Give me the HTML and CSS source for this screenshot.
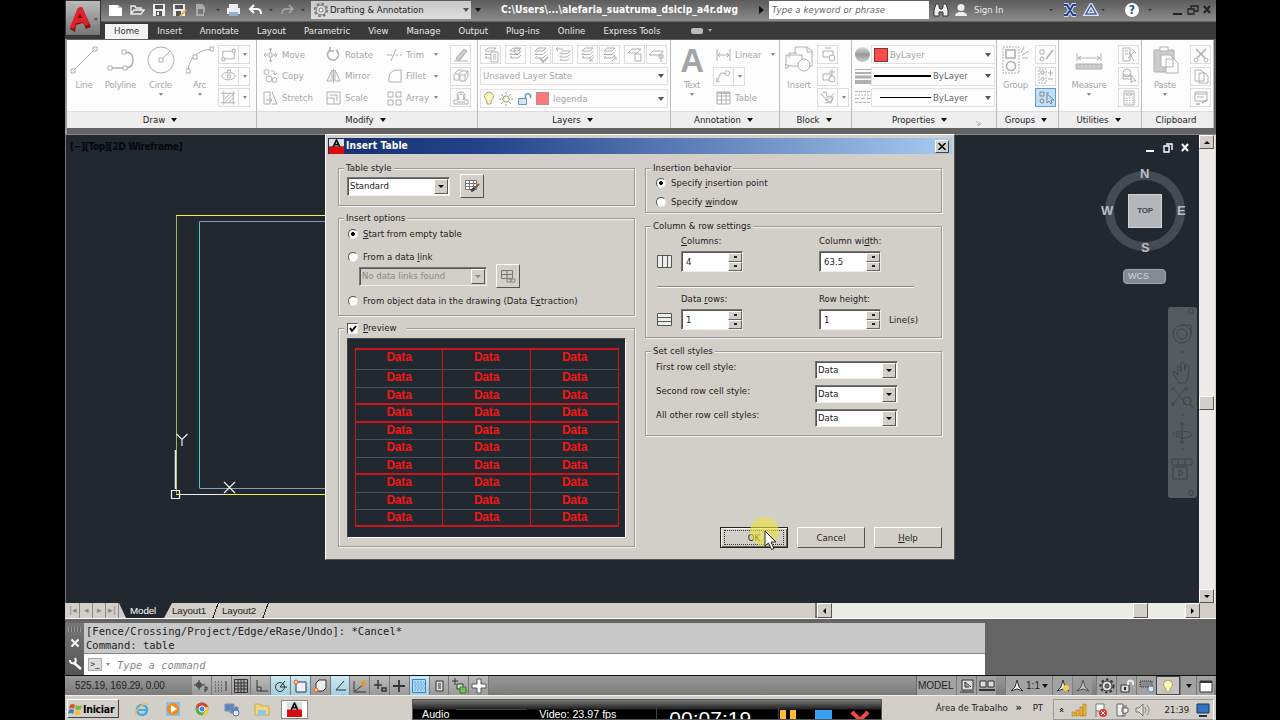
FILE: index.html
```html
<!DOCTYPE html>
<html lang="en">
<head>
    <meta charset="UTF-8">
    <meta name="viewport" content="width=device-width, initial-scale=1.0">
    <title>Insert Table</title>
    <link rel="stylesheet" href="styles.css">
</head>
<body>
    <!-- shared icons -->
    <svg class="defs" width="0" height="0">
        <symbol id="layer" viewBox="0 0 16 16"><path d="M3 5l3-3h8l-3 3zM3 8.500l2-2M3 8.500h8l3-3M3 12l2-2M3 12h8l3-3"/></symbol>
        <symbol id="person" viewBox="0 0 14 14"><circle cx="7" cy="4.500" r="3.500"/><path d="M1 13q0-3 4-4h4q4 1 4 4z"/></symbol>
        <symbol id="compass" viewBox="0 0 14 14"><path fill="#eee" d="M7 1l2 7 4 4-6-2-6 2 4-4z"/></symbol>
        <symbol id="cad" viewBox="0 0 16 16"><path fill="#ddd" d="M0 0h16v8H0z"/><path fill="#d80c0c" d="M0 8h16v8H0z"/><path fill="none" stroke="#111" stroke-width="1.800" d="M4.500 8.500L8 1l3.500 7.500M6 6h4"/></symbol>
        <symbol id="plus" viewBox="0 0 14 14"><path d="M7 1v12M1 7h12"/></symbol>
    </svg>

    <div class="screen">
        <!-- title bar + ribbon tabs -->
        <header class="header">
            <div class="app-button">
                <svg width="22" height="30" viewBox="0 0 22 30"><path fill="#8e1014" d="M1 25L9 4l4-1 9 20-5 2-3-6-7 2-1 7z"/><path fill="#e32229" d="M1 23L9 4l4-1 7 17-4 2-2-4-7 1-2 6z"/><path fill="#621014" d="M9 14l2-5 2 5z"/></svg>
                <i class="caret dark"></i>
            </div>
            <div class="header-main">
                <div class="titlebar">
                    <div class="quick">
                        <svg width="15" height="14" viewBox="0 0 15 14"><path fill="#fff" d="M1 2h9l4 3v8H1z"/><path fill="#bbb" d="M10 2v3h4z"/></svg>
                        <svg width="16" height="14" viewBox="0 0 16 14"><path fill="none" stroke="#eee" stroke-width="1.300" d="M2 11V3h4l1 2h5v2M2 11l3-4h10l-3 4z"/></svg>
                        <svg width="14" height="14" viewBox="0 0 14 14"><path fill="#eee" d="M1 1h12v12H1z"/><path fill="#555" d="M3 2h8v4H3zM4 8h6v5H4z"/><path fill="#eee" d="M5 9h2v3H5z"/></svg>
                        <svg width="15" height="14" viewBox="0 0 15 14"><path fill="#eee" d="M1 1h12v12H1z"/><path fill="#555" d="M3 2h8v4H3zM4 8h5v5H4z"/><path stroke="#e7b04b" stroke-width="2" d="M8 13l6-6"/></svg>
                        <svg width="16" height="14" viewBox="0 0 16 14"><path fill="#aaa" d="M2 1h6l3 3v9H2z"/><path fill="#777" d="M4 6h5v5H4zM10 9h5v4h-5z"/></svg>
                        <i class="caret dim"></i>
                        <svg width="15" height="14" viewBox="0 0 15 14"><path fill="#eee" d="M3 1h9v4H3zM1 5h13v6H1z"/><path fill="#8fb0ce" d="M3 9h9v4H3z"/></svg>
                        <svg width="15" height="14" viewBox="0 0 15 14"><path fill="none" stroke="#fff" stroke-width="2" d="M2 6h7q4 0 4 5M6 2L2 6l4 4"/></svg>
                        <i class="caret dim"></i>
                        <svg width="15" height="14" viewBox="0 0 15 14"><path fill="none" stroke="#aaa" stroke-width="1.500" d="M13 6H6q-4 0-4 5M9 2l4 4-4 4"/></svg>
                        <i class="caret dim"></i>
                    </div>
                    <div class="workspace">
                        <svg width="16" height="16" viewBox="0 0 16 16"><circle cx="8" cy="8" r="6.300" fill="none" stroke="#777" stroke-width="1.800" stroke-dasharray="2.600 2.300"/><circle cx="8" cy="8" r="5" fill="#ddd" stroke="#777"/><circle cx="8" cy="8" r="2" fill="#fff" stroke="#777"/></svg>
                        <span>Drafting &amp; Annotation</span>
                        <i class="caret dark"></i>
                    </div>
                    <i class="caret black quick-more"></i>
                    <div class="doc-name">C:\Users\...\alefaria_suatruma_dsicip_a4r.dwg</div>
                    <i class="play"></i>
                    <div class="search">Type a keyword or phrase</div>
                    <div class="account">
                        <svg width="16" height="14" viewBox="0 0 16 14"><path fill="#eee" stroke="#333" d="M3 1h3v3l1 2h2l1-2V1h3l2 6v6h-5V9H6v4H1V7z"/></svg>
                        <svg class="user" width="14" height="14"><use href="#person"/></svg>
                        <span class="sign-in">Sign In</span>
                        <i class="caret dim"></i>
                        <svg class="exchange" width="14" height="14" viewBox="0 0 14 14"><path fill="none" stroke="#cfd9f2" stroke-width="4" d="M1 2h3l6 10h3M13 2h-3L4 12H1"/><path fill="none" stroke="#27418d" stroke-width="2" d="M1 2h3l6 10h3M13 2h-3L4 12H1"/></svg>
                        <svg width="16" height="14" viewBox="0 0 16 14"><path fill="none" stroke="#dce5f7" stroke-width="4" d="M8 2l5 9H3z"/><path fill="none" stroke="#456097" stroke-width="1.500" d="M8 2l5 9H3z"/></svg>
                        <i class="caret dim"></i>
                        <div class="help">?</div>
                        <i class="caret dim"></i>
                        <svg class="winctl" width="40" height="12" viewBox="0 0 40 12"><path fill="none" stroke="#222" stroke-width="2" d="M1 10h9M32 2l6 7M38 2l-6 7"/><path fill="none" stroke="#222" stroke-width="1.300" d="M16 5h6v5h-6zM19 5V2h7v5h-4"/></svg>
                    </div>
                </div>
                <nav class="tabs">
                    <a class="tab active">Home</a>
                    <a class="tab">Insert</a>
                    <a class="tab">Annotate</a>
                    <a class="tab">Layout</a>
                    <a class="tab">Parametric</a>
                    <a class="tab">View</a>
                    <a class="tab">Manage</a>
                    <a class="tab">Output</a>
                    <a class="tab">Plug-ins</a>
                    <a class="tab">Online</a>
                    <a class="tab">Express Tools</a>
                    <span class="pill"></span>
                    <i class="caret light"></i>
                </nav>
            </div>
        </header>

        <!-- ribbon -->
        <section class="ribbon">
            <div class="panel p-draw">
                <div class="panel-body">
                    <div class="big w34"><svg width="28" height="30" viewBox="0 0 28 30"><path d="M3 26L25 4"/><path class="node" d="M1 24h4v4H1zM23 2h4v4h-4z"/></svg><span>Line</span></div>
                    <div class="big w39"><svg width="28" height="30" viewBox="0 0 28 30"><path class="thick" d="M3 23h15q8 0 8-8 0-8-8-8"/><path class="node" d="M1 21h4v4H1zM16 21h4v4h-4zM15 5h4v4h-4z"/></svg><span>Polyline</span></div>
                    <div class="big w41"><svg width="28" height="30" viewBox="0 0 28 30"><circle cx="14" cy="15" r="13"/><path d="M14 15l9-9"/><path class="node" d="M12 13h4v4h-4z"/></svg><span>Circle</span><i class="caret grey"></i></div>
                    <div class="big w37"><svg width="28" height="30" viewBox="0 0 28 30"><path d="M2 27Q3 6 26 4"/><path class="node" d="M0 24h4v4H0zM7 10h4v4H7zM24 2h4v4h-4z"/></svg><span>Arc</span><i class="caret grey"></i></div>
                    <div class="stack">
                        <div class="split"><svg width="20" height="18" viewBox="0 0 20 18"><path d="M4 5h12v8H4z"/><path class="node" d="M3 12h3v3H3zM14 3h3v3h-3z"/></svg><i class="caret grey"></i></div>
                        <div class="split"><svg width="20" height="18" viewBox="0 0 20 18"><ellipse cx="10" cy="9" rx="7" ry="4"/><path class="node" d="M9 8h3v3H9zM9 3h3v3H9z"/></svg><i class="caret grey"></i></div>
                        <div class="split"><svg width="20" height="18" viewBox="0 0 20 18"><path d="M5 2v14M15 2v14M2 4h15M2 14h15M6 10l6-6M6 14L15 5M10 14l5-5"/></svg><i class="caret grey"></i></div>
                    </div>
                </div>
                <div class="panel-title">Draw <i class="caret black"></i></div>
            </div>

            <div class="panel p-modify">
                <div class="panel-body">
                    <div class="tools w63">
                        <div class="tool"><svg width="15" height="16" viewBox="0 0 15 16"><path d="M6 6h3v4H6zM7.500 5V1M7.500 11v4M5 8H1M10 8h4M6 3l1.500-2L9 3M6 13l1.500 2L9 13M3 6L1 8l2 2M12 6l2 2-2 2"/></svg>Move</div>
                        <div class="tool"><svg width="15" height="16" viewBox="0 0 15 16"><circle cx="3.500" cy="4" r="2.500"/><circle cx="6" cy="11" r="3"/><circle cx="11.500" cy="12" r="2.500"/><path d="M8 3q4-1 4 4M10 5l2 2 2-2"/></svg>Copy</div>
                        <div class="tool"><svg width="15" height="16" viewBox="0 0 15 16"><path d="M1 2h6v12H1zM9 2l5 12H9M3 10h6M7 8l2 2-2 2"/></svg>Stretch</div>
                    </div>
                    <div class="tools w61">
                        <div class="tool"><svg width="15" height="16" viewBox="0 0 15 16"><path class="thick" d="M10 3a5.500 5.500 0 1 1-6 0M4 0v4h4"/></svg>Rotate</div>
                        <div class="tool"><svg width="15" height="16" viewBox="0 0 15 16"><path d="M6 2v11H1zM9 2v11h5zM7.500 1v14"/></svg>Mirror</div>
                        <div class="tool"><svg width="15" height="16" viewBox="0 0 15 16"><path d="M1 2h13v12H1zM1 8h7v6M4 5h7v6"/></svg>Scale</div>
                    </div>
                    <div class="tools w63">
                        <div class="tool"><svg width="15" height="16" viewBox="0 0 15 16"><path d="M0 8h5M9 8h2M13 8h2M4 14L9 2"/></svg>Trim<i class="caret grey"></i></div>
                        <div class="tool"><svg width="15" height="16" viewBox="0 0 15 16"><path d="M2 14V9q1-7 9-7h3v12z"/></svg>Fillet<i class="caret grey"></i></div>
                        <div class="tool"><svg width="15" height="16" viewBox="0 0 15 16"><path d="M1 2h5v5H1zM9 2h5v5H9zM1 10h5v5H1zM9 10h5v5H9z"/></svg>Array<i class="caret grey"></i></div>
                    </div>
                    <div class="stack">
                        <div class="sq"><svg width="18" height="18" viewBox="0 0 18 18"><path fill="#ccc" d="M4 12l8-9 3 2-7 9H5z"/><path d="M2 15h14"/></svg></div>
                        <div class="sq"><svg width="18" height="18" viewBox="0 0 18 18"><path d="M2 7h5v6H2zM7 7l3-3h6v6l-3 4M8 8h5v6H8zM13 8l3-4M3 6l3-3h4"/></svg></div>
                        <div class="sq"><svg width="18" height="18" viewBox="0 0 18 18"><path d="M2 15h14v-4h-4q3-8-3-8-6 0-3 8H2zM5 13h8M7 11q-2-6 2-6t2 6"/></svg></div>
                    </div>
                </div>
                <div class="panel-title">Modify <i class="caret black"></i></div>
            </div>

            <div class="panel p-layers">
                <div class="panel-body column">
                    <div class="layer-row">
                        <div class="sq"><svg width="18" height="18" viewBox="0 0 18 18"><use href="#layer" width="16" height="16"/><path class="node" d="M9 6h7v10H9zM11 9h3M11 11h3M11 13h3"/></svg></div>
                        <div class="sq sp"><svg width="18" height="18" viewBox="0 0 18 18"><use href="#layer" width="16" height="16"/><circle cx="10" cy="5" r="3"/></svg></div>
                        <div class="sq sp"><svg width="18" height="18" viewBox="0 0 18 18"><use href="#layer" width="16" height="16"/><path class="thick" d="M8 12l3 4 5-5"/></svg></div>
                        <div class="sq"><svg width="18" height="18" viewBox="0 0 18 18"><use href="#layer" x="3" y="3" width="15" height="15"/><path d="M2 3h7M4 1L2 3l2 2"/></svg></div>
                        <div class="sq sp"><svg width="18" height="18" viewBox="0 0 18 18"><use href="#layer" width="16" height="16"/><path d="M15 11l-4 4v-3M11 15h3"/></svg></div>
                        <div class="sq"><svg width="18" height="18" viewBox="0 0 18 18"><use href="#layer" width="16" height="16"/><path d="M11 15l4-4v3M15 11h-3"/></svg></div>
                        <div class="sq sp"><svg width="18" height="18" viewBox="0 0 18 18"><path d="M2 7l4-4h9l-4 4zM9 8h6v7H9z"/></svg></div>
                        <div class="sq"><svg width="18" height="18" viewBox="0 0 18 18"><path d="M1 9l4-4h10l-3 4zM13 9v7M11 9h4v3h-4z"/></svg></div>
                    </div>
                    <div class="combo">Unsaved Layer State<i class="caret dark"></i></div>
                    <div class="combo layer-combo">
                        <svg width="12" height="15" viewBox="0 0 12 15"><path fill="#fdf7b8" stroke="#aaa284" d="M4 10Q1 7 1.500 4.500 3 1 6 1q3 0 4.500 3.500Q11 7 8 10v3H4z"/></svg>
                        <svg width="14" height="14" viewBox="0 0 14 14"><circle cx="7" cy="7" r="3.200" fill="#fdf7c8" stroke="#999"/><path stroke="#999" d="M7 0v2M7 12v2M0 7h2M12 7h2M2 2l2 2M10 10l2 2M12 2l-2 2M2 12l2-2"/></svg>
                        <svg width="15" height="14" viewBox="0 0 15 14"><path fill="#cfe3f3" stroke="#6795bb" d="M1.500 6.500h8v6h-8z"/><path fill="none" stroke="#6795bb" stroke-width="1.500" d="M8.500 6V3q2-3 5 0v3"/></svg>
                        <b class="swatch pale"></b><span>legenda</span><i class="caret dark"></i>
                    </div>
                </div>
                <div class="panel-title">Layers <i class="caret black"></i></div>
            </div>

            <div class="panel p-annotation">
                <div class="panel-body">
                    <div class="big w42"><div class="letter-a">A</div><span>Text</span><i class="caret grey"></i></div>
                    <div class="tools w63">
                        <div class="tool"><svg width="15" height="16" viewBox="0 0 15 16"><path d="M1 2v12M14 2v12M2 8h11M4 6L2 8l2 2M11 6l2 2-2 2"/></svg>Linear<i class="caret grey"></i></div>
                        <div class="split"><svg width="20" height="18" viewBox="0 0 20 18"><path d="M3 15l4-9h5M3 11v4h3"/><circle cx="14" cy="6" r="2.500"/></svg><i class="caret grey"></i></div>
                        <div class="tool"><svg width="15" height="16" viewBox="0 0 15 16"><path d="M1 2h13v12H1zM1 6h13M1 10h13M5.500 2v12M10 2v12"/><path class="thick" d="M1 3h13"/></svg>Table</div>
                    </div>
                </div>
                <div class="panel-title">Annotation <i class="caret black"></i></div>
            </div>

            <div class="panel p-block">
                <div class="panel-body">
                    <div class="big w36"><svg width="28" height="30" viewBox="0 0 28 30"><path d="M10 9V2h12l5 4v15h-5M22 2v5h5M1 10h16v11H1zM4 13V8h8"/><circle class="node" cx="19" cy="20" r="6"/><path class="node" d="M0 20h3v3H0z"/></svg><span>Insert</span></div>
                    <div class="stack">
                        <div class="sq"><svg width="18" height="18" viewBox="0 0 18 18"><path d="M4 5h10v6H4zM6 2h6"/><circle class="node" cx="13" cy="12" r="3"/></svg></div>
                        <div class="sq"><svg width="18" height="18" viewBox="0 0 18 18"><path d="M4 7h8v6H4zM13 2v7M10 5h6"/><circle class="node" cx="13" cy="12" r="3"/></svg></div>
                        <div class="split"><svg width="20" height="18" viewBox="0 0 20 18"><path d="M3 4l6 8 8-8M5 3h4v4M7 14h7l2-7"/><circle cx="12" cy="10" r="3"/></svg><i class="caret grey"></i></div>
                    </div>
                </div>
                <div class="panel-title">Block <i class="caret black"></i></div>
            </div>

            <div class="panel p-properties">
                <div class="panel-body">
                    <div class="prop-icons">
                        <div class="ball"></div>
                        <svg width="16" height="16" viewBox="0 0 16 16"><path d="M0 1.500h16"/><path stroke-width="2" d="M0 5h16"/><path stroke-width="3" d="M0 9h16"/><path stroke-width="4" d="M0 14h16"/></svg>
                        <svg width="16" height="16" viewBox="0 0 16 16"><path stroke-dasharray="3 1" d="M0 2.500h16M0 13.500h16"/><path stroke-dasharray="2 1" d="M0 6h16"/><path stroke-dasharray="4 2" d="M0 9.500h16"/></svg>
                    </div>
                    <div class="prop-combos">
                        <div class="combo"><b class="swatch"></b><span>ByLayer</span><i class="caret dark"></i></div>
                        <div class="combo ink"><b class="weight heavy"></b><span>ByLayer</span><i class="caret dark"></i></div>
                        <div class="combo ink"><b class="weight"></b><span>ByLayer</span><i class="caret dark"></i></div>
                    </div>
                </div>
                <div class="panel-title">Properties <i class="caret black"></i><svg class="launcher" width="6" height="6" viewBox="0 0 6 6"><path d="M1 1l4 4V2M5 5H2"/></svg></div>
            </div>

            <div class="panel p-groups">
                <div class="panel-body">
                    <div class="big w37"><svg width="28" height="30" viewBox="0 0 28 30"><path stroke-dasharray="2 1" d="M1 2h16v26H1z"/><path class="thick" d="M4 5h9v8H4z"/><circle class="thick" cx="9" cy="21" r="4.500"/><path d="M19 8l3-6M20 10l7-4M20 13h6"/></svg><span>Group</span></div>
                    <div class="stack">
                        <div class="sq"><svg width="18" height="18" viewBox="0 0 18 18"><path class="thick" d="M9 13l7-9"/><path d="M3 4h4v4H3z"/><circle cx="5" cy="13" r="2"/></svg></div>
                        <div class="sq"><svg width="18" height="18" viewBox="0 0 18 18"><path stroke-dasharray="2 1" d="M2 2h7v14H2z"/><path d="M4 4h3v3H4zM11 6h5M13.500 3v6M11 12h5"/><circle cx="5.500" cy="12" r="1.500"/></svg></div>
                        <div class="sq on"><svg width="18" height="18" viewBox="0 0 18 18"><path d="M3 3h4v4H3zM9 4h3M10 5v9l2-2 2 3 1-1-1-3h3z"/><circle cx="5" cy="12" r="2"/></svg></div>
                    </div>
                </div>
                <div class="panel-title">Groups <i class="caret black"></i></div>
            </div>

            <div class="panel p-utilities">
                <div class="panel-body">
                    <div class="big w58"><svg width="28" height="30" viewBox="0 0 28 30"><path d="M2 8v8M26 8v8M3 13h22M6 11l-3 2 3 2M22 11l3 2-3 2"/><path fill="#ccc" d="M1 19h26v5H1zM5 19v2M9 19v2M13 19v2M17 19v2M21 19v2"/></svg><span>Measure</span><i class="caret grey"></i></div>
                    <div class="stack">
                        <div class="sq"><svg width="18" height="18" viewBox="0 0 18 18"><path d="M3 2h7v13H3zM5 5h3M5 8h3M8 12l7-7M12 3l4 4M9 6l5 9"/></svg></div>
                        <div class="sq"><svg width="18" height="18" viewBox="0 0 18 18"><circle cx="7" cy="6" r="4"/><path d="M3 8h8v4H3zM11 8l5 6h-3l-2 2z"/></svg></div>
                        <div class="sq"><svg width="18" height="18" viewBox="0 0 18 18"><path d="M4 2h10v14H4zM6 4h6v2H6z"/><path stroke-dasharray="1.500 1.500" d="M6 9h7M6 11.500h7M6 14h7"/></svg></div>
                    </div>
                </div>
                <div class="panel-title">Utilities <i class="caret black"></i></div>
            </div>

            <div class="panel p-clipboard">
                <div class="panel-body">
                    <div class="big w46"><svg width="28" height="30" viewBox="0 0 28 30"><path fill="#ccc" d="M3 5h20v22H3z"/><path class="node" d="M9 2h8v4H9zM10 10h9l3 3v9H10zM15 14h8l4 4v10H15z"/></svg><span>Paste</span><i class="caret grey"></i></div>
                    <div class="stack">
                        <div class="sq"><svg width="18" height="18" viewBox="0 0 18 18"><path class="thick" d="M4 3l9 9M14 3l-9 9"/><circle cx="4" cy="14" r="2"/><circle cx="14" cy="14" r="2"/></svg></div>
                        <div class="sq"><svg width="18" height="18" viewBox="0 0 18 18"><path class="node" d="M3 3h6l3 3v8H3zM7 6h6l3 3v7H7z"/></svg></div>
                        <div class="sq"><svg width="18" height="18" viewBox="0 0 18 18"><path d="M3 3h12v9H3zM3 5h12M5 8h7"/><path class="thick" d="M4 15h4M10 14l5-3"/></svg></div>
                    </div>
                </div>
                <div class="panel-title">Clipboard</div>
            </div>
        </section>

        <!-- drawing area -->
        <main class="workarea">
            <div class="canvas">
                <div class="view-label">[−][Top][2D Wireframe]</div>
                <svg class="drawing" width="262" height="468" viewBox="0 0 262 468">
                    <path stroke="#a6b05c" d="M111.500 80.500v278"/>
                    <path stroke="#f4f43c" d="M111 80.500H262M111 359.500H262"/>
                    <path stroke="#4fc6cc" d="M134.500 87v266"/>
                    <path stroke="#7fa0b4" d="M134.500 86.500H262M134.500 353.500H262"/>
                    <path stroke="#eee" stroke-width="1.500" d="M110.500 315v39"/>
                    <path stroke="#eee" stroke-width="1.200" d="M106.500 355.500h8v8h-8zM115 359.500h46M159 347l11 11M170 347l-11 11M111.500 299l5.500 5.500 5.500-5.500M117 304v7"/>
                </svg>
                <svg class="doc-ctl" width="46" height="12" viewBox="0 0 46 12"><path fill="none" stroke="#fff" stroke-width="2" d="M1 9h8M37 2l6 7M43 2l-6 7"/><path fill="none" stroke="#fff" stroke-width="1.400" d="M19 4h5v6h-5zM21 2h6v6"/></svg>
                <div class="viewcube">
                    <i class="ring"></i>
                    <span class="n">N</span><span class="w">W</span><span class="e">E</span><span class="s">S</span>
                    <div class="face">TOP</div>
                </div>
                <div class="wcs">WCS</div>
                <div class="navbar">
                    <svg width="28" height="190" viewBox="0 0 28 190">
                        <circle cx="23" cy="4" r="2.500"/><circle cx="23" cy="186" r="2.500"/>
                        <circle cx="14" cy="27" r="9"/><circle cx="14" cy="27" r="5"/><path d="M14 18h9v9"/>
                        <path d="M9 73l-4-7q0-3 3 0l2 2-1-8q2-2 3 0l1 5V56q2-2 3 0l1 8 1-6q2-1 3 1l-1 12-3 5h-6z"/>
                        <path d="M6 82l12 15M17 82L5 97M4 84v-3h3M16 81h3v3M4 95v3h3"/><circle cx="19" cy="94" r="4"/><path d="M22 97l3 4"/>
                        <path d="M14 116v20M12 118l2-3 2 3M12 134l2 3 2-3M6 129q-5-4 8-5 13 1 9 5-5 3-11 2"/><circle cx="10" cy="128" r="2"/>
                        <path d="M4 152h20v6H4zM10 152v6M17 152v6M5 160h14v12H5zM11 163v6l4-3z"/>
                        <path d="M13 45h3M13 108h3M13 142h3"/>
                    </svg>
                </div>
            </div>
            <div class="vscroll">
                <div class="sbtn"><i class="arrow up"></i></div>
                <div class="sthumb"></div>
                <div class="sbtn"><i class="arrow down"></i></div>
            </div>
        </main>

        <!-- layout tabs + horizontal scrollbar -->
        <div class="layouts">
            <div class="navs"><span>|◂</span><span>◂</span><span>▸</span><span>▸|</span></div>
            <div class="ltab current">Model</div>
            <div class="ltab">Layout1</div>
            <div class="ltab">Layout2</div>
            <div class="hscroll">
                <div class="sbtn"><i class="arrow left"></i></div>
                <div class="sthumb"></div>
                <div class="sbtn"><i class="arrow right"></i></div>
            </div>
        </div>

        <!-- command line -->
        <div class="command">
            <div class="cmd-side">
                <i class="grip"></i>
                <svg width="10" height="10" viewBox="0 0 10 10"><path stroke="#fff" stroke-width="2" d="M1.500 1.500l7 7M8.500 1.500l-7 7"/></svg>
                <svg width="14" height="13" viewBox="0 0 14 13"><path fill="none" stroke="#fff" stroke-width="2.500" d="M6 6l7 6"/><path fill="none" stroke="#fff" stroke-width="2" d="M2 3q0 4 4 3 3-1 1-5"/></svg>
            </div>
            <div class="cmd-main">
                <div class="cmd-log">[Fence/Crossing/Project/Edge/eRase/Undo]: *Cancel*<br>Command: table</div>
                <div class="cmd-input"><b>&gt;_</b><i class="caret grey"></i><span>Type a command</span></div>
            </div>
        </div>

        <!-- status bar -->
        <div class="status">
            <div class="coords">525.19, 169.29, 0.00</div>
            <div class="toggles">
                <div><svg width="16" height="14" viewBox="0 0 16 14"><path d="M6 1v10M1 6h11M4 4h4v4H4zM12 13V8h2v3h-2"/></svg></div>
                <div><svg width="14" height="14" viewBox="0 0 14 14"><path stroke-dasharray="1 2" d="M1 3h9M1 6h9M1 9h9M1 12h9"/><path d="M12 2v10"/></svg></div>
                <div><svg width="14" height="14" viewBox="0 0 14 14"><path d="M.5.500h13v13H.5zM4 0v14M7 0v14M10 0v14M0 4h14M0 7h14M0 10h14"/></svg></div>
                <div><svg width="14" height="14" viewBox="0 0 14 14"><path d="M3 1v11h11M3 8h4v4"/></svg></div>
                <div class="on"><svg width="14" height="14" viewBox="0 0 14 14"><circle cx="6" cy="8" r="4.500"/><path d="M6 8l5-6M6 8h7"/></svg></div>
                <div class="on"><svg width="14" height="14" viewBox="0 0 14 14"><path fill="#eef" d="M3 3h10v10H3z"/><circle cx="3" cy="3" r="2" fill="#fc8" stroke="#c63"/></svg></div>
                <div><svg width="14" height="14" viewBox="0 0 14 14"><path fill="#eee" d="M3 4l3-3h7v8l-3 3H3z"/><circle cx="3" cy="11" r="2" fill="#fc8" stroke="#c63"/></svg></div>
                <div class="on"><svg width="14" height="14" viewBox="0 0 14 14"><path d="M11 2L3 11h10"/></svg></div>
                <div><svg width="14" height="14" viewBox="0 0 14 14"><path d="M1 2v11h12M2 12l8-6"/><path stroke="#e49a32" stroke-width="2" d="M12 1L9 4l3 1-3 3"/></svg></div>
                <div><svg width="14" height="14" viewBox="0 0 14 14"><path stroke-width="1.500" d="M5 1v9M1 6h8M9 9h4v3H9z"/></svg></div>
                <div><svg width="14" height="14" viewBox="0 0 14 14"><g stroke-width="1.800"><use href="#plus"/></g></svg></div>
                <div class="on"><svg width="14" height="14" viewBox="0 0 14 14"><path fill="#b2dafa" stroke="#3684ba" d="M.5.500h13v13H.5z"/><path stroke="#5c9dc9" stroke-dasharray="2 1" d="M2 3h10M3 5h10M2 7h10M3 9h10M2 11h10"/></svg></div>
                <div><svg width="14" height="14" viewBox="0 0 14 14"><path fill="#ddd" d="M4 2h7v10H4zM6 5h3M6 7h3M6 9h3"/></svg></div>
                <div><svg width="16" height="16" viewBox="0 0 16 16"><path fill="#ddd" d="M4 0v7M1 3h6M6 6h6v5H6z"/><path fill="#71c25c" stroke="#347c28" d="M9 9h6v6H9z"/></svg></div>
                <div><svg width="16" height="16" viewBox="0 0 16 16"><path fill="#fff" stroke="#555" d="M6 1h4v5h5v4h-5v5H6v-5H1V6h5z"/></svg></div>
            </div>
            <div class="status-right">
                <div class="model">MODEL</div>
                <div class="cell"><svg width="14" height="14" viewBox="0 0 14 14"><path fill="#ddd" d="M2 1h11v10H2zM0 13h14M5 3l6 5M5 3v5h4"/></svg></div>
                <div class="cell"><svg width="16" height="14" viewBox="0 0 16 14"><path fill="#ddd" d="M1 2h6v6H1zM9 2h6v6H9z"/><path stroke-width="2" d="M0 11h16"/></svg></div>
                <div class="cell scale"><svg width="14" height="14"><use href="#compass"/></svg>1:1<i class="caret black"></i></div>
                <div class="cell"><svg width="14" height="14"><use href="#compass"/><circle cx="10" cy="9" r="3" fill="#ffc84e" stroke="none"/></svg></div>
                <div class="cell faded"><svg width="14" height="14"><use href="#compass"/></svg></div>
                <div class="cell gear"><svg width="16" height="16" viewBox="0 0 16 16"><circle cx="8" cy="8" r="6.500" stroke-width="2" stroke-dasharray="2.500 2.300"/><circle cx="8" cy="8" r="5" fill="#ddd"/><circle cx="8" cy="8" r="2" fill="#777"/></svg></div>
                <div class="cell"><svg width="16" height="14" viewBox="0 0 16 14"><path fill="#ddd" d="M2 6h8v7H2z"/><path stroke="#eee" stroke-width="2" d="M9 6V3q2-3 5 0v3"/><path stroke="#222" stroke-width="2" d="M6 8v3"/></svg></div>
                <div class="cell"><svg width="16" height="14" viewBox="0 0 16 14"><path fill="#888" stroke-dasharray="1 1" d="M1 2h12v6H1z"/><circle cx="12" cy="10" r="3" fill="#d5e7f5" stroke="#6289b5"/></svg></div>
                <div class="cell bulb"><svg width="12" height="14" viewBox="0 0 12 14"><path fill="#fff9b3" stroke="#a39864" d="M4 10Q1 7 1.500 4.500 3 1 6 1q3 0 4.500 3.500Q11 7 8 10v3H4z"/></svg></div>
                <div class="cell more"><i class="caret black"></i></div>
                <div class="cell clean"><svg width="14" height="14" viewBox="0 0 14 14"><path fill="#fff" d="M1 2h12v11H1z"/><path stroke-width="2" d="M1 3h12"/></svg></div>
            </div>
        </div>

        <!-- taskbar -->
        <footer class="taskbar">
            <div class="start"><svg width="15" height="14" viewBox="0 0 15 14"><path fill="#e0562d" d="M2 3q3-2 5 0L6 7Q4 5 1 7z"/><path fill="#79b83c" d="M8 3q3 2 6 0l-1 4q-3 2-6 0z"/><path fill="#3a84c8" d="M1 8q3-2 5 0l-1 4q-2-2-5 0z"/><path fill="#f2c230" d="M7 8q3 2 6 0l-1 4q-3 2-6 0z"/></svg>Iniciar</div>
            <div class="pinned">
                <svg width="16" height="16" viewBox="0 0 16 16"><circle cx="8" cy="9" r="5" fill="none" stroke="#44a9e4" stroke-width="2.500"/><path stroke="#44a9e4" stroke-width="2" d="M4 9h9"/><path fill="none" stroke="#efc04a" stroke-width="1.500" d="M2 14Q0 11 7 5q7-5 7-1"/></svg>
                <svg width="16" height="16" viewBox="0 0 16 16"><path fill="#8dbce3" d="M1 1h14v14H1z"/><circle cx="8" cy="8" r="6" fill="#f08a1c"/><path fill="#fff" d="M6 4l6 4-6 4z"/></svg>
                <svg width="14" height="14" viewBox="0 0 14 14"><circle cx="7" cy="7" r="6.500" fill="#4dae50"/><path fill="#dd4536" d="M1 4q2-3.500 6-3.500T13.500 5H7L4 8z"/><path fill="#f7cb35" d="M13.500 5q1 7-6 8.500L10 8 7 5z"/><circle cx="7" cy="7" r="3" fill="#4285f4" stroke="#fff"/></svg>
                <svg width="16" height="16" viewBox="0 0 16 16"><path fill="#5583c8" stroke="#8792a5" d="M1 3h9v7H1zM6 6h8v6H6z"/><circle cx="12" cy="12" r="3" fill="#dce8f8" stroke="#5d7291"/></svg>
                <svg width="16" height="16" viewBox="0 0 16 16"><path fill="#f3d878" stroke="#c8aa4c" d="M1 3h5l1 2h8v9H1z"/><path fill="#91c8ea" d="M4 9h8v5H4z"/></svg>
                <div class="running"><svg width="15" height="15"><use href="#cad"/></svg></div>
            </div>
            <div class="tray-label">Área de Trabalho <b>»</b> <span>PT</span></div>
            <div class="tray">
                <b>«</b>
                <svg width="16" height="14" viewBox="0 0 16 14"><path fill="#eeb73a" stroke="#a87a20" stroke-width=".6" d="M1 9h3v4H1zM5 7h3v6H5zM9 4h3v9H9zM12 1h3v12h-3z"/></svg>
                <svg width="16" height="16" viewBox="0 0 16 16"><path fill="#fff" stroke="#777" d="M3 2v13M3 2h8v7H3"/><circle cx="10" cy="11" r="4" fill="#da3b32"/><path stroke="#fff" d="M8 9l4 4M12 9l-4 4"/></svg>
                <svg width="14" height="16" viewBox="0 0 14 16"><path fill="#eee" stroke="#666" d="M2 2h6v12H2zM7 6h6v4q-3 3-6 0zM9 3v3M11 3v3M10 11v3H7"/></svg>
                <svg width="16" height="14" viewBox="0 0 16 14"><path fill="#ddd" stroke="#777" d="M1 5h3l4-4v12L4 9H1z"/><path fill="none" stroke="#888" d="M10 4q2 3 0 6M12 2q4 5 0 10"/></svg>
                <span>21:39</span>
                <svg width="14" height="14" viewBox="0 0 14 14"><path fill="#3273c6" stroke="#234" d="M1 1h12v9H1z"/><path stroke="#234" stroke-width="2" d="M3 13h8"/></svg>
            </div>
            <!-- screen recorder sits over the taskbar -->
            <div class="recorder">
                <span>Audio</span><i class="meter"></i>
                <span class="fps">Video: 23.97 fps</span>
                <div class="timer">00:07:19</div>
                <div class="rec-buttons">
                    <i class="pause"></i><i class="stop"></i>
                    <svg width="20" height="20" viewBox="0 0 20 20"><path stroke="#f04a48" stroke-width="4" d="M2 2l16 16M18 2L2 18"/></svg>
                </div>
            </div>
        </footer>

        <!-- Insert Table dialog -->
        <div class="dialog">
            <div class="dialog-title"><svg width="15" height="15"><use href="#cad"/></svg><span>Insert Table</span><div class="close"><svg width="8" height="7" viewBox="0 0 8 7"><path stroke="#000" stroke-width="1.500" d="M.5 0l7 7M7.500 0l-7 7"/></svg></div></div>
            <div class="dialog-body">
                <div class="col-left">
                    <fieldset class="f-style">
                        <legend>Table style</legend>
                        <div class="select w102">Standard<b><i class="arrow down"></i></b></div>
                        <div class="tool-btn"><svg width="16" height="16" viewBox="0 0 16 16"><path fill="#fff" stroke="#777" d="M1.500 2.500h11v9h-11zM1 5.500h12M1 8.500h12M5.500 3v9M9.500 3v9"/><path stroke="#8d5b33" stroke-width="2" d="M15 6l-4 4"/><path stroke="#444" stroke-width="3" d="M11 10l-4 3"/></svg></div>
                    </fieldset>
                    <fieldset class="f-options">
                        <legend>Insert options</legend>
                        <label class="radio checked"><i></i><span><u>S</u>tart from empty table</span></label>
                        <label class="radio r2"><i></i><span>From a data <u>l</u>ink</span></label>
                        <div class="link-row">
                            <div class="select disabled w128">No data links found<b><i class="arrow down"></i></b></div>
                            <div class="tool-btn"><svg width="16" height="16" viewBox="0 0 16 16"><path fill="none" stroke="#777" d="M1.500 2.500h11v8h-11zM1 6.500h12M7 3v8"/><path fill="#ccc" stroke="#888" d="M7 11h4v3H7zM11 11h4v3h-4z"/></svg></div>
                        </div>
                        <label class="radio r3"><i></i><span>From object data in the drawing (Data E<u>x</u>traction)</span></label>
                    </fieldset>
                    <fieldset class="f-preview">
                        <legend><i class="check"><svg width="8" height="8" viewBox="0 0 8 8"><path fill="none" stroke="#000" stroke-width="1.800" d="M1 3l2 3 4-5"/></svg></i><span><u>P</u>review</span></legend>
                        <div class="preview">
                            <div class="grid">
                                <span>Data</span><span>Data</span><span>Data</span>
                                <span>Data</span><span>Data</span><span>Data</span>
                                <span class="red">Data</span><span class="red">Data</span><span class="red">Data</span>
                                <span class="red">Data</span><span class="red">Data</span><span class="red">Data</span>
                                <span>Data</span><span>Data</span><span>Data</span>
                                <span>Data</span><span>Data</span><span>Data</span>
                                <span class="red">Data</span><span class="red">Data</span><span class="red">Data</span>
                                <span>Data</span><span>Data</span><span>Data</span>
                                <span>Data</span><span>Data</span><span>Data</span>
                                <span class="red">Data</span><span class="red">Data</span><span class="red">Data</span>
                            </div>
                        </div>
                    </fieldset>
                </div>
                <div class="col-right">
                    <fieldset class="f-behavior">
                        <legend>Insertion behavior</legend>
                        <label class="radio checked"><i></i><span>Specify <u>i</u>nsertion point</span></label>
                        <label class="radio"><i></i><span>Specify <u>w</u>indow</span></label>
                    </fieldset>
                    <fieldset class="f-settings">
                        <legend>Column &amp; row settings</legend>
                        <div class="settings">
                            <svg class="dim-icon" width="15" height="15" viewBox="0 0 15 15"><path fill="#eee" stroke="#555" d="M.5 1.500h14v12H.5zM5.500 1v13M10.500 1v13"/></svg>
                            <div class="field"><span><u>C</u>olumns:</span><div class="spin">4<b><i></i><i></i></b></div></div>
                            <div class="field"><span>Column wi<u>d</u>th:</span><div class="spin">63.5<b><i></i><i></i></b></div></div>
                        </div>
                        <hr>
                        <div class="settings">
                            <svg class="dim-icon" width="15" height="15" viewBox="0 0 15 15"><path fill="#eee" stroke="#555" d="M.5 1.500h14v12H.5zM0 5.500h15M0 9.500h15"/></svg>
                            <div class="field"><span>Data <u>r</u>ows:</span><div class="spin">1<b><i></i><i></i></b></div></div>
                            <div class="field"><span>Row hei<u>g</u>ht:</span><div class="spin">1<b><i></i><i></i></b></div></div>
                            <span class="unit">Line(s)</span>
                        </div>
                    </fieldset>
                    <fieldset class="f-cells">
                        <legend>Set cell styles</legend>
                        <div class="cell-row"><span>First row cell style:</span><div class="select w83">Data<b><i class="arrow down"></i></b></div></div>
                        <div class="cell-row"><span>Second row cell style:</span><div class="select w83">Data<b><i class="arrow down"></i></b></div></div>
                        <div class="cell-row"><span>All other row cell styles:</span><div class="select w83">Data<b><i class="arrow down"></i></b></div></div>
                    </fieldset>
                    <div class="actions">
                        <div class="btn default"><span>OK</span></div>
                        <div class="btn">Cancel</div>
                        <div class="btn"><span><u>H</u>elp</span></div>
                    </div>
                </div>
            </div>
        </div>

        <!-- highlighted mouse pointer -->
        <div class="pointer"><svg width="14" height="21" viewBox="0 0 14 21"><path fill="#fff" stroke="#222" d="M1 1v15l3.500-3 3 6.500 2.500-1-3-6.500h5z"/></svg></div>
    </div>
</body>
</html>
```
FILE: styles.css
```css
* {
    margin: 0;
    padding: 0;
    box-sizing: border-box;
}

body {
    background: #000;
    font-family: "DejaVu Sans Condensed", "DejaVu Sans", sans-serif;
    font-size: 9.5px;
    line-height: 12px;
    color: #222;
    overflow: hidden;
}

i, b {
    font-style: normal;
}

svg {
    flex: none;
    display: block;
}

.defs {
    position: absolute;
}

.screen {
    position: relative;
    width: 1280px;
    height: 720px;
    padding: 0 64px 0 65px;
    overflow: hidden;
    white-space: nowrap;
    display: flex;
    flex-direction: column;
}

.caret {
    display: inline-block;
    flex: none;
    border: 3px solid transparent;
    border-top: 4px solid #333;
    border-bottom: 0;
}

.caret.black { border-top-color: #111; border-left-width: 3.5px; border-right-width: 3.5px; }
.caret.dark { border-top-color: #555; }
.caret.grey { border-top-color: #888; border-left-width: 2px; border-right-width: 2px; border-top-width: 3px; }
.caret.dim { border-top-color: #333; border-left-width: 2px; border-right-width: 2px; border-top-width: 2px; }
.caret.light { border-top-color: #aaa; border-left-width: 2px; border-right-width: 2px; border-top-width: 3px; }

/* header */
.header {
    display: flex;
    height: 39px;
    background: linear-gradient(#5c5c5c, #8b8b8b 21px, #3a3a3a 22px);
}

.app-button {
    width: 36px;
    height: 36px;
    padding: 2px 0 0 3px;
    display: flex;
    align-items: center;
    gap: 3px;
    background: linear-gradient(#bbb, #777);
    border: 1px solid #333;
}

.app-button .caret { border-width: 3px 2.5px 0; }

.header-main {
    flex: 1;
    min-width: 0;
}

.titlebar {
    height: 22px;
    display: flex;
    align-items: center;
    padding-bottom: 2px;
}

.quick {
    width: 210px;
    padding-left: 7px;
    display: flex;
    align-items: center;
    gap: 6.4px;
}

.workspace {
    width: 160px;
    height: 18px;
    padding: 0 2px;
    display: flex;
    align-items: center;
    gap: 1px;
    background: linear-gradient(#c8c8c8, #dedede);
}

.workspace .caret {
    margin-left: auto;
}

.quick-more {
    margin: 0 20px 0 4px;
}

.doc-name {
    width: 258px;
    color: #fff;
    font-size: 10.2px;
    font-weight: bold;
    letter-spacing: 0.08px;
}

.play {
    border: 4px solid transparent;
    border-left: 5px solid #111;
    border-right: 0;
    margin-right: 5px;
}

.search {
    width: 160px;
    height: 18px;
    line-height: 18px;
    padding-left: 3px;
    background: #fff;
    color: #666;
    font-style: italic;
    letter-spacing: 0.1px;
}

.account {
    flex: 1;
    display: flex;
    align-items: center;
    padding-left: 4px;
    color: #eee;
}

.user {
    fill: #eee;
    margin: 0 6px 0 5px;
}

.sign-in { width: 73px; }
.exchange { margin: 0 6px 0 10px; }

.account .caret { margin-left: 2px; }

.help {
    width: 14px;
    height: 14px;
    margin: 0 7px 0 20px;
    border-radius: 50%;
    background: #fff;
    color: #2f4f8f;
    font-size: 12px;
    font-weight: bold;
    line-height: 14px;
    text-align: center;
}

.winctl { margin-left: 20px; }

.tabs {
    height: 17px;
    display: flex;
    align-items: center;
    padding-left: 4px;
    color: #e8e8e8;
}

.tab {
    height: 15px;
    padding: 0 9px;
    line-height: 15px;
}

.tab.active {
    margin-top: 2px;
    line-height: 14px;
    background: #f3f3f3;
    color: #333;
}

.pill {
    width: 12px;
    height: 6px;
    margin: 0 5px 0 22px;
    border-radius: 2px;
    background: #bbb;
}

/* ribbon */
.ribbon {
    display: flex;
    height: 95px;
    padding: 1px 0 6px 2px;
    background: #646464;
    box-shadow: inset 2px 0 #999;
    color: #a6a6a6;
}

.panel {
    border-right: 1px solid #bbb;
    background: #fdfdfd;
}

.p-draw { width: 190px; }
.p-modify { width: 221px; }
.p-layers { width: 193px; }
.p-annotation { width: 109px; }
.p-block { width: 72px; }
.p-properties { width: 145px; }
.p-groups { width: 62px; }
.p-utilities { width: 83px; }
.p-clipboard { width: 72px; }

.panel svg {
    fill: none;
    stroke: #b0b0b0;
    stroke-width: 1;
}

.panel svg .thick { stroke-width: 1.6; }
.panel svg .node { fill: #fff; }

.panel-body {
    height: 71px;
    padding-top: 5px;
    display: flex;
}

.panel-body.column {
    flex-direction: column;
    padding: 5px 2px 0 2px;
    gap: 3px;
}

.panel-title {
    height: 17px;
    display: flex;
    align-items: center;
    justify-content: center;
    gap: 6px;
    padding-right: 3px;
    background: #eee;
    border-top: 1px solid #ddd;
    color: #222;
}

.p-modify .panel-body { padding-left: 6px; }
.p-block .panel-body { padding-left: 1px; }
.p-utilities .panel-body { padding-left: 1px; }

.big {
    display: flex;
    flex-direction: column;
    align-items: center;
    letter-spacing: -0.2px;
}

.big span { margin-top: 4px; }
.big .caret { margin-top: 2px; }

.w34 { width: 34px; }
.w36 { width: 36px; }
.w37 { width: 37px; }
.w39 { width: 39px; }
.w41 { width: 41px; }
.w42 { width: 42px; }
.w46 { width: 46px; }
.w58 { width: 58px; }
.w61 { width: 61px; }
.w63 { width: 63px; }

.letter-a {
    height: 30px;
    font: bold 33px/32px "Liberation Sans", sans-serif;
    color: #a4a4a4;
}

.stack, .tools {
    display: flex;
    flex-direction: column;
    gap: 2.5px;
}

.tool {
    height: 19px;
    display: flex;
    align-items: center;
    gap: 4px;
}

.tool .caret {
    margin-left: auto;
    margin-right: 12px;
}

.p-annotation .tool { padding-left: 3px; width: 74px; }

.sq {
    width: 21px;
    height: 19px;
    border: 1px solid #ddd;
    display: flex;
    align-items: center;
    justify-content: center;
}

.sq.on {
    background: #c3def5;
    border-color: #5da0d5;
}

.sq.on svg { stroke: #7a8a99; }

.split {
    width: 32px;
    height: 19px;
    display: flex;
    align-items: center;
    border: 1px solid #ddd;
}

.split .caret {
    margin-left: 4px;
}

.split svg { border-right: 1px solid #ddd; }

.p-groups .stack, .p-utilities .stack, .p-clipboard .stack { margin-left: auto; margin-right: 2px; }

.layer-row { display: flex; gap: 1px; }
.layer-row .sp { margin-left: 3px; }

.combo {
    height: 18px;
    padding: 0 3px 0 2px;
    display: flex;
    align-items: center;
    border: 1px solid #e2e2e2;
}

.combo .caret { margin-left: auto; }

.layer-combo {
    height: 19px;
    margin-top: 1px;
    gap: 4px;
}

.swatch {
    width: 14px;
    height: 14px;
    background: #fb4a4a;
    border: 1px solid #833;
}

.swatch.pale {
    width: 13px;
    height: 13px;
    background: #fa7a7a;
    border-color: #c88;
}

.prop-icons {
    width: 16px;
    margin: 2px 0 0 3px;
    display: flex;
    flex-direction: column;
    gap: 5.5px;
}

.ball {
    width: 15px;
    height: 15px;
    border-radius: 50%;
    background: linear-gradient(#ddd, #999 50%, #ccc);
}

.prop-combos {
    width: 124px;
    display: flex;
    flex-direction: column;
    gap: 2.5px;
}

.prop-combos .combo { height: 19px; }
.combo.ink { color: #666; }
.prop-combos .swatch { margin-right: 2px; }

.weight {
    width: 51px;
    height: 1px;
    margin: 0 2px 0 6px;
    background: #000;
}

.weight.heavy {
    width: 57px;
    height: 2px;
    margin-left: 0;
}

.launcher { margin: 6px -28px 0 22px; }

/* drawing area */
.workarea {
    display: flex;
    height: 469px;
    border-top: 1px solid #888;
    background: #d2cec8;
}

.canvas {
    position: relative;
    width: 1134px;
    background: #212830;
    border-left: 1px solid #777;
}

.view-label {
    position: absolute;
    left: 4px;
    top: 6px;
    color: #05070a;
    font-size: 10px;
    font-weight: bold;
    letter-spacing: -0.35px;
}

.drawing {
    position: absolute;
    left: -1px;
    top: 0;
    fill: none;
}

.doc-ctl {
    position: absolute;
    left: 1079px;
    top: 7px;
}

.viewcube {
    position: absolute;
    left: 1034px;
    top: 32px;
    width: 90px;
    height: 90px;
    font: bold 13px/14px "Liberation Sans", sans-serif;
    color: #b9bdc1;
}

.viewcube > * { position: absolute; }

.ring {
    left: 5px;
    top: 4px;
    width: 80px;
    height: 80px;
    border: 9px solid #454b53;
    border-radius: 50%;
}

.n { left: 40px; top: 0; }
.s { left: 41px; top: 74px; }
.w { left: 1px; top: 37px; }
.e { left: 77px; top: 37px; }

.face {
    left: 28px;
    top: 27px;
    width: 34px;
    height: 34px;
    background: #b4b6ba;
    border: 1px solid #d0d2d4;
    color: #444a52;
    font-size: 8px;
    letter-spacing: -0.3px;
    line-height: 32px;
    text-align: center;
}

.wcs {
    position: absolute;
    left: 1057px;
    top: 134px;
    width: 43px;
    height: 15px;
    padding-left: 4px;
    border: 1px solid #a2a6ab;
    border-radius: 4px;
    background: #858a91;
    color: #d4d6d9;
    font: 9px/13px "Liberation Sans", sans-serif;
}

.navbar {
    position: absolute;
    left: 1102px;
    top: 172px;
    width: 29px;
    height: 191px;
    border-radius: 3px;
    background: #565b60;
}

.navbar svg {
    fill: none;
    stroke: #3f4347;
}

.vscroll {
    width: 16px;
    margin-right: auto;
    display: flex;
    flex-direction: column;
    background: #ecebe8;
}

.sbtn, .sthumb {
    width: 15px;
    height: 14px;
    background: #d2cec8;
    border: 1px solid #fff;
    border-right-color: #555;
    border-bottom-color: #555;
    display: flex;
    align-items: center;
    justify-content: center;
}

.vscroll .sthumb { margin: 247px 0 auto; }

.arrow { border: 3px solid transparent; }
.arrow.up { border-bottom-color: #000; border-top: 0; }
.arrow.down { border-top-color: #000; border-bottom: 0; }
.arrow.left { border-right-color: #000; border-left: 0; }
.arrow.right { border-left-color: #000; border-right: 0; }

/* layout tabs */
.layouts {
    display: flex;
    height: 16px;
    background: #d2cec8;
    border-bottom: 1px solid #fff;
    font-family: "Liberation Sans", sans-serif;
    font-size: 9.8px;
    letter-spacing: -0.1px;
    line-height: 15px;
}

.navs {
    display: flex;
    padding-left: 2px;
}

.navs span {
    width: 13px;
    border-right: 1px solid #888;
    color: #888;
    font-size: 9px;
    text-align: center;
}

.ltab {
    width: 50px;
    padding-left: 0;
    background: linear-gradient(110deg, transparent 43px, #222 43px, #222 44px, transparent 44px);
}

.ltab.current {
    width: 53px;
    padding-left: 11px;
    background: #212830;
    color: #fff;
    clip-path: polygon(0 0, 100% 0, 45px 100%, 7px 100%);
}

.hscroll {
    width: 385px;
    margin-left: 543px;
    display: flex;
    background: #ecebe8;
    border-left: 2px solid #777;
}

.hscroll .sthumb { margin: 0 auto 0 301px; }
.hscroll .sbtn, .hscroll .sthumb { height: 15px; }

/* command line */
.command {
    display: flex;
    height: 56px;
    padding-top: 4px;
    background: #646464;
}

.cmd-side {
    width: 19px;
    display: flex;
    flex-direction: column;
    align-items: center;
    gap: 9px;
    background: linear-gradient(#777, #555);
}

.grip {
    width: 14px;
    height: 5px;
    margin-top: 4px;
    margin-bottom: -3px;
    background: repeating-linear-gradient(90deg, #999 0 1px, #666 1px 3px);
}

.cmd-main {
    width: 901px;
    font-family: "DejaVu Sans Mono", monospace;
    font-size: 10.5px;
}

.cmd-log {
    height: 31px;
    padding: 2px 0 0 2px;
    line-height: 13.5px;
    background: #c8c8c8;
    border-bottom: 1px solid #888;
}

.cmd-input {
    height: 21px;
    padding-left: 4px;
    display: flex;
    align-items: center;
    gap: 4px;
    background: #fff;
    color: #888;
    font-style: italic;
}

.cmd-input b {
    width: 14px;
    height: 13px;
    border: 1px solid #aaa;
    background: #ddd;
    color: #555;
    font-size: 8px;
    line-height: 11px;
    text-align: center;
}

.cmd-input span { margin-left: 3px; }

/* status bar */
.status {
    display: flex;
    height: 20px;
    border-top: 1px solid #111;
    background: linear-gradient(#999, #7a7a7a);
    font-family: "Liberation Sans", sans-serif;
    font-size: 10px;
    line-height: 20px;
}

.status svg {
    fill: none;
    stroke: #333;
}

.coords {
    width: 127px;
    padding-left: 10px;
    letter-spacing: -0.1px;
}

.toggles { display: flex; }

.toggles div {
    width: 19.8px;
    display: flex;
    align-items: center;
    justify-content: center;
    background: linear-gradient(#bbb, #999);
    border-right: 1px solid #777;
}

.toggles .on { background: linear-gradient(#cdeaf4, #9fcfdf); }

.status-right {
    display: flex;
    margin-left: auto;
    margin-right: 2px;
}

.model {
    width: 40px;
    padding-left: 1px;
    background: #a2a2a2;
    border-left: 1px solid #666;
}

.cell {
    width: 20px;
    display: flex;
    align-items: center;
    justify-content: center;
    background: #a2a2a2;
    border-left: 1px solid #777;
}

.cell.scale {
    width: 47px;
    margin-left: 9px;
    gap: 2px;
}

.cell.gear { margin-left: 4px; }
.cell.faded { opacity: .6; }
.cell.more { width: 16px; }
.cell.clean { width: 18px; }

.cell.bulb {
    width: 24px;
    background: #c5c5c5;
    border: 1px solid #444;
}

/* taskbar */
.taskbar {
    position: relative;
    display: flex;
    height: 25px;
    padding: 3px 2px 0;
    background: #d2cec8;
    border-top: 1px solid #eee;
}

.start {
    width: 52px;
    height: 19px;
    display: flex;
    align-items: center;
    border: 1px solid #fff;
    border-right-color: #444;
    border-bottom-color: #444;
    font-size: 10.5px;
    font-weight: bold;
    letter-spacing: -0.3px;
    color: #000;
}

.pinned {
    display: flex;
    align-items: center;
    gap: 14.5px;
    height: 20px;
    margin-left: 15px;
}

.running {
    width: 27px;
    height: 19px;
    margin-left: -4px;
    padding: 1px 5px;
    background: #fff;
    border: 1px solid #888;
}

.tray-label {
    margin-left: auto;
    margin-right: 8px;
    line-height: 18px;
}

.tray-label b { font-size: 11px; margin: 0 4px 0 5px; }
.tray-label span { margin: 0 2px 0 4px; }

.tray {
    width: 161px;
    height: 21px;
    padding-left: 5px;
    display: flex;
    align-items: center;
    gap: 6px;
    border: 1px solid #999;
    border-right-color: #fff;
}

.tray b { transform: rotate(90deg); }
.tray span { margin: 0 1px 0 8px; }

.recorder {
    position: absolute;
    left: 347px;
    top: 3px;
    width: 470px;
    height: 21px;
    display: flex;
    padding: 7px 0 0 9px;
    background: linear-gradient(#777, #222 9px, #000 10px);
    border: 1px solid #555;
    color: #fff;
    font-family: "Liberation Sans", sans-serif;
    font-size: 10.7px;
    overflow: hidden;
    line-height: 14px;
}

.meter {
    width: 70px;
    height: 9px;
    margin: 2px 13px 0 7px;
    background: #000;
    border-top: 1px solid #444;
}

.fps { width: 117px; }

.timer {
    width: 123px;
    padding-left: 12px;
    border-left: 1px solid #444;
    border-right: 1px solid #444;
    font-size: 21px;
    line-height: 24px;
}

.rec-buttons { display: flex; padding-top: 3px; }

.pause {
    width: 16px;
    height: 20px;
    margin: 0 19px 0 1px;
    background: linear-gradient(90deg, #fb3 6px, transparent 6px 10px, #fb3 10px);
}

.stop {
    width: 17px;
    height: 20px;
    margin-right: 18px;
    background: #39a0f2;
}

/* dialog */
.dialog {
    position: absolute;
    left: 325px;
    top: 134px;
    width: 630px;
    height: 426px;
    padding: 3px 2px;
    background: #d2cec8;
    border: 1px solid #fff;
    border-right-color: #555;
    border-bottom-color: #555;
}

.dialog-title {
    height: 16px;
    display: flex;
    align-items: center;
    padding: 0 3px 0 1px;
    gap: 2px;
    background: linear-gradient(90deg, #16306e, #23438a 25%, #a6caf0);
    color: #fff;
    font-weight: bold;
    font-size: 10.2px;
    letter-spacing: 0.1px;
}

.close {
    width: 14px;
    height: 13px;
    margin-left: auto;
    display: flex;
    align-items: center;
    justify-content: center;
    background: #d2cec8;
    border: 1px solid #fff;
    border-right-color: #444;
    border-bottom-color: #444;
}

.dialog-body {
    display: flex;
    gap: 10px;
    padding: 8px 0 0 10px;
    letter-spacing: 0.04px;
}

.col-left, .col-right {
    width: 297px;
    display: flex;
    flex-direction: column;
    gap: 6px;
}

.col-right { gap: 7px; }

fieldset {
    border: 1px solid #999;
    box-shadow: 1px 1px #f4f2ee, inset 1px 1px #f4f2ee;
    min-width: 0;
}

legend {
    margin-left: 5px;
    padding: 0 2px;
    height: 12px;
    background: #d2cec8;
}

.f-style { height: 44px; }
.f-options { height: 104px; }
.f-preview { height: 225px; }
.f-behavior { height: 51px; }
.f-settings { height: 118px; }
.f-cells { height: 91px; }

.f-style {
    display: flex;
    align-items: center;
    gap: 10px;
    padding: 0 8px 1px;
}

.f-style legend { margin-left: -3px; }

.select {
    height: 19px;
    padding-left: 2px;
    display: flex;
    align-items: center;
    justify-content: space-between;
    background: #fff;
    border: 1px solid #777;
    border-right-color: #eee;
    border-bottom-color: #eee;
    box-shadow: inset 1px 1px #555;
    letter-spacing: 0;
}

.select b, .tool-btn, .btn {
    background: #d2cec8;
    border: 1px solid #fff;
    border-right-color: #555;
    border-bottom-color: #555;
}

.select b {
    width: 14px;
    height: 15px;
    margin-right: 1px;
    display: flex;
    align-items: center;
    justify-content: center;
}

.select.disabled {
    background: #d2cec8;
    color: #888;
}

.select.disabled .arrow { border-top-color: #888; }

.w83 { width: 83px; }
.w102 { width: 103px; }
.w128 { width: 128px; }

.tool-btn {
    width: 24px;
    height: 24px;
    display: flex;
    align-items: center;
    justify-content: center;
}

.radio {
    display: flex;
    align-items: center;
    gap: 5px;
    height: 12px;
    margin: 4px 0 0 9px;
}

.radio i {
    width: 10px;
    height: 10px;
    border-radius: 50%;
    background: #fff;
    border: 1px solid #555;
    border-right-color: #eee;
    border-bottom-color: #eee;
}

.radio.checked i { background: radial-gradient(#000 1.7px, #fff 2.2px); }

.radio.r2 { margin-top: 11px; }

.link-row {
    display: flex;
    align-items: center;
    gap: 9px;
    margin: 1px 0 0 20px;
}

.radio.r3 { margin-top: 7px; }

.f-preview legend {
    display: flex;
    align-items: center;
    gap: 5px;
    padding: 0 10px 0 3px;
}

.check {
    width: 11px;
    height: 11px;
    padding: 1px;
    background: #fff;
    border: 1px solid #555;
    border-right-color: #eee;
    border-bottom-color: #eee;
}

.preview {
    width: 279px;
    height: 200px;
    margin: 4px 0 0 8px;
    padding: 9px 7px;
    background: #212830;
    border: 1px solid #444;
    border-right-color: #fff;
    border-bottom-color: #fff;
}

.grid {
    width: 264px;
    display: grid;
    grid-template-columns: 87px 88px 88px;
    grid-template-rows: 20px 18px 17px 18px 17px 18px 17px 18px 17px 17px;
    border-top: 2px solid #d0141c;
    border-left: 1px solid #d0141c;
    color: #f41616;
    font: bold 12px/14px "Liberation Sans", sans-serif;
    letter-spacing: -0.2px;
    text-align: center;
}

.grid span {
    border-right: 1px solid #d0141c;
    border-bottom: 1px solid #4a5358;
}

.grid .red { border-bottom: 2px solid #d0141c; }

.f-behavior .radio {
    margin: 3px 0 7px 10px;
}

.settings {
    display: flex;
    height: 48px;
    padding-left: 11px;
}

.dim-icon { margin: 22px 9px 0 0; }

.field {
    width: 138px;
    padding-top: 3px;
    display: flex;
    flex-direction: column;
    gap: 4px;
}

.settings .field:nth-of-type(2) { width: 70px; }

.spin {
    width: 62px;
    height: 21px;
    padding-left: 4px;
    display: flex;
    align-items: center;
    justify-content: space-between;
    background: #fff;
    border: 1px solid #777;
    border-right-color: #eee;
    border-bottom-color: #eee;
    box-shadow: inset 1px 1px #555;
}

.spin b {
    width: 14px;
    height: 18px;
}

/* up and down steppers */
.spin b i {
    display: block;
    height: 9px;
    background: linear-gradient(#222, #222) center / 3px 2px no-repeat #d2cec8;
    border: 1px solid #fff;
    border-right-color: #666;
    border-bottom-color: #666;
}

.f-settings hr {
    width: 257px;
    margin: 6px 0 2px 11px;
    border: 0;
    border-top: 1px solid #888;
    border-bottom: 1px solid #fff;
}

.unit { margin-top: 24px; }

.cell-row {
    display: flex;
    justify-content: space-between;
    padding: 0 43px 0 10px;
    height: 18px;
    margin: 4px 0 6px;
}

.cell-row .select { height: 18px; }

.actions {
    display: flex;
    justify-content: flex-end;
    gap: 9px;
    margin-top: 84px;
}

.btn {
    width: 68px;
    height: 21px;
    line-height: 19px;
    text-align: center;
}

.btn.default {
    padding: 2px;
    border: 1px solid #222;
    box-shadow: inset 1px 1px #fff, inset -1px -1px #666;
}

.btn.default span {
    display: block;
    height: 15px;
    margin: 0 1px;
    border: 1px dotted #333;
    line-height: 13px;
}

.pointer {
    position: absolute;
    left: 750px;
    top: 517px;
    width: 29px;
    height: 29px;
    padding: 13px 0 0 14px;
    border-radius: 50%;
    background: rgba(236, 229, 60, 0.6);
}
```
